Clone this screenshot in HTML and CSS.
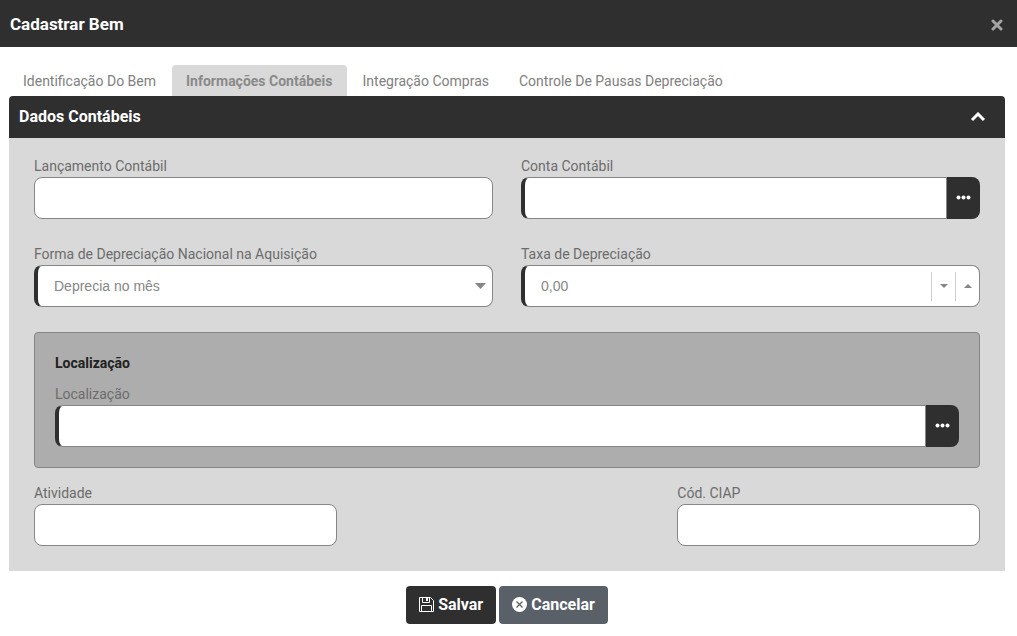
FILE: index.html
```html
<!DOCTYPE html>
<html lang="pt-BR">
<head>
    <meta charset="UTF-8">
    <meta name="viewport" content="width=device-width, initial-scale=1.0">
    <title>Cadastrar Bem</title>
    <link rel="stylesheet" href="styles.css">
</head>
<body>
    <header class="modal-header">
        <h1>Cadastrar Bem</h1>
        <button type="button" class="btn-close" aria-label="Fechar">
            <svg width="12" height="12" viewBox="0 0 12 12"><path d="M2 2l8 8M10 2l-8 8" stroke="currentColor" stroke-width="3" stroke-linecap="round"/></svg>
        </button>
    </header>

    <form class="modal-body">
        <nav class="tabs">
            <a href="#identificacao">Identificação Do Bem</a>
            <a href="#contabeis" class="active">Informações Contábeis</a>
            <a href="#compras">Integração Compras</a>
            <a href="#pausas">Controle De Pausas Depreciação</a>
        </nav>

        <section class="panel" id="contabeis">
            <div class="panel-header">
                <h2>Dados Contábeis</h2>
                <button type="button" class="btn-collapse" aria-label="Recolher">
                    <svg width="16" height="10" viewBox="0 0 16 10"><path d="M2 8l6-6 6 6" fill="none" stroke="currentColor" stroke-width="3"/></svg>
                </button>
            </div>

            <div class="panel-content">
                <div class="row">
                    <div class="field">
                        <label for="lancamento">Lançamento Contábil</label>
                        <input type="text" id="lancamento" class="control">
                    </div>
                    <div class="field">
                        <label for="conta">Conta Contábil</label>
                        <div class="input-group">
                            <input type="text" id="conta" class="control required">
                            <button type="button" class="btn-search" aria-label="Pesquisar conta">
                                <svg width="15" height="6" viewBox="0 0 15 6" fill="currentColor"><circle cx="2.500" cy="2.500" r="2"/><circle cx="7.500" cy="2.500" r="2"/><circle cx="12.500" cy="2.500" r="2"/></svg>
                            </button>
                        </div>
                    </div>
                </div>

                <div class="row">
                    <div class="field">
                        <label for="forma">Forma de Depreciação Nacional na Aquisição</label>
                        <div class="control required select-box">
                            <select id="forma">
                                <option>Deprecia no mês</option>
                            </select>
                            <svg width="11" height="6" viewBox="0 0 11 6"><path d="M0 0h11L5.500 6z" fill="currentColor"/></svg>
                        </div>
                    </div>
                    <div class="field">
                        <label for="taxa">Taxa de Depreciação</label>
                        <div class="control required spinner">
                            <input type="text" id="taxa" value="0,00">
                            <button type="button" aria-label="Diminuir">
                                <svg width="8" height="4" viewBox="0 0 8 4"><path d="M0 0h8L4 4z" fill="currentColor"/></svg>
                            </button>
                            <button type="button" aria-label="Aumentar">
                                <svg width="8" height="4" viewBox="0 0 8 4"><path d="M0 4h8L4 0z" fill="currentColor"/></svg>
                            </button>
                        </div>
                    </div>
                </div>

                <div class="group-box">
                    <h3>Localização</h3>
                    <div class="field">
                        <label for="localizacao">Localização</label>
                        <div class="input-group">
                            <input type="text" id="localizacao" class="control required">
                            <button type="button" class="btn-search" aria-label="Pesquisar localização">
                                <svg width="15" height="6" viewBox="0 0 15 6" fill="currentColor"><circle cx="2.500" cy="2.500" r="2"/><circle cx="7.500" cy="2.500" r="2"/><circle cx="12.500" cy="2.500" r="2"/></svg>
                            </button>
                        </div>
                    </div>
                </div>

                <div class="row row-split">
                    <div class="field">
                        <label for="atividade">Atividade</label>
                        <input type="text" id="atividade" class="control">
                    </div>
                    <div class="field">
                        <label for="ciap">Cód. CIAP</label>
                        <input type="text" id="ciap" class="control">
                    </div>
                </div>
            </div>
        </section>

        <div class="actions">
            <button type="button" class="btn btn-primary">
                <svg width="15" height="15" viewBox="0 0 15 15" fill="none" stroke="currentColor"><path d="M.5.5h11l3 3v11H.5z"/><path d="M3.500.500v5h7v-5M2.500 14.500v-6h10v6"/><path d="M7 1h2v3H7z" fill="currentColor" stroke="none"/></svg>
                Salvar
            </button>
            <button type="button" class="btn btn-secondary">
                <svg width="15" height="15" viewBox="0 0 15 15"><circle cx="7.500" cy="7.500" r="7.500" fill="currentColor"/><path d="M4.500 4.500l6 6M10.500 4.500l-6 6" stroke="#5a6068" stroke-width="1.300"/></svg>
                Cancelar
            </button>
        </div>
    </form>
</body>
</html>
```
FILE: styles.css
```css
* {
    margin: 0;
    padding: 0;
    box-sizing: border-box;
}

body {
    font-family: Roboto, Arial, sans-serif;
    font-size: 14px;
    color: #6c6c6c;
    background: #fff;
}

input, select, button {
    font: inherit;
    color: inherit;
}

input, select {
    font-family: "Liberation Sans", Arial, sans-serif;
}

button {
    border: none;
    background: none;
    cursor: pointer;
}

svg {
    display: block;
    flex: none;
}

.modal-header {
    display: flex;
    align-items: center;
    justify-content: space-between;
    height: 47px;
    padding: 0 14px 0 10px;
    background: #2f2f2f;
    color: #fff;
}

h1 {
    font-size: 17px;
    font-weight: 700;
}

h2 {
    font-size: 16px;
    font-weight: 700;
}

.btn-close {
    padding-top: 3px;
    color: #a5a5a5;
}

.modal-body {
    padding: 18px 12px 12px 9px;
}

.tabs {
    display: flex;
    gap: 2px;
}

.tabs a {
    height: 31px;
    padding: 0 14px;
    line-height: 32px;
    border-radius: 4px 4px 0 0;
    color: #808080;
    text-decoration: none;
}

.tabs .active {
    background: #d9d9d9;
    color: #8a8a8a;
    font-weight: 700;
}

.panel-header {
    display: flex;
    align-items: center;
    justify-content: space-between;
    height: 42px;
    padding: 0 19px 0 10px;
    border-radius: 4px 4px 0 0;
    background: #2f2f2f;
    color: #fff;
}

.panel-header h2 {
    padding-bottom: 2px;
}

.panel-content {
    padding: 18px 25px 25px;
    background: #d9d9d9;
}

.row {
    display: grid;
    grid-template-columns: 1fr 1fr;
    gap: 28px;
    margin-bottom: 25px;
}

.row-split {
    grid-template-columns: 32% 32%;
    justify-content: space-between;
    margin-bottom: 0;
}

label {
    display: block;
    line-height: 21px;
}

.control {
    display: block;
    width: 100%;
    height: 42px;
    padding: 0 16px;
    border: 1px solid #868686;
    border-radius: 8px;
    background: #fff;
    color: #868686;
}

.required {
    border-left: 4px solid #2f2f2f;
}

.input-group {
    display: flex;
}

.input-group .control {
    flex: 1;
    min-width: 0;
    border-radius: 8px 0 0 8px;
}

.btn-search {
    display: flex;
    align-items: center;
    justify-content: center;
    width: 33px;
    border-radius: 0 8px 8px 0;
    background: #2f2f2f;
    color: #fff;
}

.select-box {
    display: flex;
    align-items: center;
    padding-right: 6px;
}

.select-box select {
    flex: 1;
    appearance: none;
    border: none;
    background: none;
    outline: none;
}

.spinner {
    display: flex;
    align-items: center;
    padding-right: 0;
}

.spinner input {
    flex: 1;
    min-width: 0;
    border: none;
    background: none;
    outline: none;
}

.spinner button {
    display: flex;
    align-items: center;
    justify-content: center;
    width: 24px;
    height: 29px;
    border-left: 1px solid #ccc;
}

.group-box {
    margin-bottom: 15px;
    padding: 20px;
    border: 1px solid #868686;
    border-radius: 4px;
    background: #adadad;
}

.group-box h3 {
    margin-bottom: 11px;
    font-size: 14px;
    line-height: 20px;
    color: #212121;
}

.actions {
    display: flex;
    justify-content: center;
    gap: 3px;
    margin-top: 15px;
}

.btn {
    display: flex;
    align-items: center;
    gap: 4px;
    height: 38px;
    padding: 0 13px 1px;
    border-radius: 4px;
    color: #fff;
    font-size: 16px;
    font-weight: 700;
}

.btn-primary {
    background: #2f2f2f;
}

.btn-secondary {
    background: #5a6068;
}
```
